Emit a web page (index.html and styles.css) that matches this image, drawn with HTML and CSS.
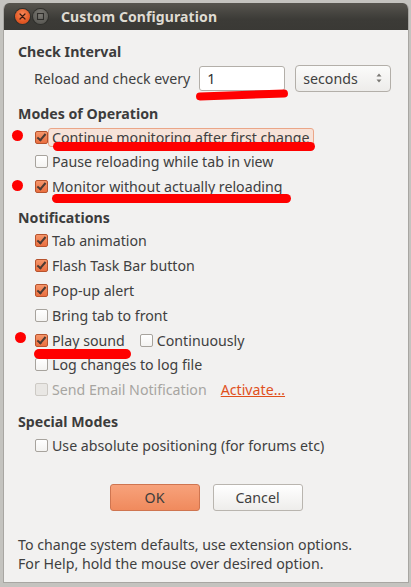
FILE: index.html
```html
<!DOCTYPE html>
<html>
<head>
<meta charset="utf-8">
<link rel="stylesheet" href="styles.css">
</head>
<body>
<div class="window">
  <div class="titlebar">
    <span class="wbtn close"><svg width="15" height="15" viewBox="0 0 15 15"><path d="M5 5 L10 10 M10 5 L5 10" stroke="#3a1a10" stroke-width="1.2" stroke-linecap="round"/></svg></span>
    <span class="wbtn maxi"><svg width="15" height="15" viewBox="0 0 15 15"><rect x="4.5" y="4.5" width="6" height="6" fill="none" stroke="#2e2d2a" stroke-width="1.1"/></svg></span>
    <span class="title">Custom Configuration</span>
  </div>
  <div class="content">
    <div class="heading">Check Interval</div>
    <div class="interval">
      <span class="label">Reload and check every</span>
      <span class="input">1</span>
      <span class="select"><span>seconds</span>
        <svg width="8" height="14" viewBox="0 0 8 14"><path d="M4 2.5 L6.5 5.5 H1.5 Z M4 11.5 L6.5 8.5 H1.5 Z" fill="#7a7874"/></svg>
      </span>
    </div>

    <div class="heading sec">Modes of Operation</div>
    <div class="group modes">
      <div class="opt"><span class="cb on"></span><span class="txt focus">Continue monitoring after first change</span></div>
      <div class="opt"><span class="cb"></span><span class="txt">Pause reloading while tab in view</span></div>
      <div class="opt"><span class="cb on"></span><span class="txt">Monitor without actually reloading</span></div>
    </div>

    <div class="heading sec2">Notifications</div>
    <div class="group notes">
      <div class="opt"><span class="cb on"></span><span class="txt">Tab animation</span></div>
      <div class="opt"><span class="cb on"></span><span class="txt">Flash Task Bar button</span></div>
      <div class="opt"><span class="cb on"></span><span class="txt">Pop-up alert</span></div>
      <div class="opt"><span class="cb"></span><span class="txt">Bring tab to front</span></div>
      <div class="opt"><span class="cb on"></span><span class="txt">Play sound</span><span class="cb second"></span><span class="txt">Continuously</span></div>
      <div class="opt"><span class="cb"></span><span class="txt">Log changes to log file</span></div>
      <div class="opt disabled"><span class="cb off"></span><span class="txt">Send Email Notification</span><span class="link">Activate...</span></div>
    </div>

    <div class="heading sec3">Special Modes</div>
    <div class="group special">
      <div class="opt"><span class="cb"></span><span class="txt">Use absolute positioning (for forums etc)</span></div>
    </div>

    <div class="buttons">
      <span class="btn ok">OK</span>
      <span class="btn cancel">Cancel</span>
    </div>

    <div class="footer">
      <div>To change system defaults, use extension options.</div>
      <div>For Help, hold the mouse over desired option.</div>
    </div>
  </div>

  <div class="marks">
    <span class="dot d1"></span>
    <span class="dot d2"></span>
    <span class="dot d3"></span>
    <span class="ul u-input"></span>
    <span class="ul u1"></span>
    <span class="ul u2"></span>
    <span class="ul u3"></span>
  </div>
</div>
</body>
</html>
```

FILE: styles.css
```css
html, body {
  margin: 0;
  padding: 0;
}
body {
  background: #c4c3bf;
  width: 411px;
  height: 587px;
  overflow: hidden;
  font-family: "Noto Sans", "DejaVu Sans", sans-serif;
  font-size: 14.2px;
  color: #404040;
}
.window {
  position: relative;
  margin: 3px 2px 0 3px;
  width: 406px;
  height: 580px;
  background: #f2f1f0;
  border-radius: 6px 6px 0 0;
  box-sizing: border-box;
  border-left: 1px solid #a8a6a2;
  border-right: 1px solid #a8a6a2;
  border-bottom: 1px solid #a8a6a2;
  overflow: hidden;
}
.titlebar {
  height: 27px;
  background: linear-gradient(#57554f, #3c3b37 60%, #3a3935);
  display: flex;
  align-items: center;
  padding-left: 11px;
}
.wbtn {
  width: 15px;
  height: 15px;
  border-radius: 50%;
  display: flex;
}
.close {
  background: radial-gradient(circle at 50% 35%, #f98a5a, #e45a26 60%, #c9461a);
  box-shadow: 0 0 0 1px #30302c;
}
.maxi {
  margin-left: 3px;
  background: radial-gradient(circle at 50% 35%, #7d7b75, #5d5c57 70%, #4e4d49);
  box-shadow: 0 0 0 1px #30302c;
}
.title {
  margin-left: 13px;
  font-weight: bold;
  color: #dfdbd2;
  font-size: 14px;
  letter-spacing: 0.1px;
}
.content {
  padding: 11px 14px 0 14px;
}
.heading {
  height: 22px;
  line-height: 22px;
  font-weight: bold;
  color: #3c3c3c;
}
.sec { margin-top: 11px; }
.sec2 { margin-top: 8px; }
.sec3 { margin-top: 9px; }
.interval {
  margin-top: 1px;
  height: 28px;
  display: flex;
  align-items: center;
  padding-left: 16px;
}
.input {
  margin-left: 9px;
  width: 86px;
  height: 25px;
  box-sizing: border-box;
  background: #fff;
  border: 1px solid #b3afa9;
  border-radius: 3px;
  padding-left: 7px;
  line-height: 23px;
  color: #2e2e2e;
}
.select {
  margin-left: 10px;
  width: 96px;
  height: 27px;
  box-sizing: border-box;
  border: 1px solid #b3afa9;
  border-radius: 4px;
  background: linear-gradient(#fbfbfa, #edecea);
  display: flex;
  align-items: center;
  justify-content: space-between;
  padding: 0 7px 0 7px;
}
.select svg { display: block; }
.opt {
  height: 24.5px;
  display: flex;
  align-items: center;
  padding-left: 17px;
}
.notes .opt { height: 24.8px; }
.cb {
  width: 13px;
  height: 13px;
  box-sizing: border-box;
  border: 1px solid #a7a39d;
  border-radius: 2px;
  background: linear-gradient(#ffffff, #f4f3f1);
  flex: none;
  position: relative;
}
.cb.on {
  border-color: #b7532d;
  background: linear-gradient(#f6966a, #ea6f40);
}
.cb.on::after {
  content: "";
  position: absolute;
  left: 3px;
  top: 0px;
  width: 3px;
  height: 7px;
  border-right: 2px solid #4b3a33;
  border-bottom: 2px solid #4b3a33;
  transform: rotate(40deg);
}
.cb.off {
  border-color: #cdcac5;
  background: #e9e7e4;
}
.txt {
  margin-left: 4px;
  line-height: 17px;
}
.txt.focus {
  margin-left: 0;
  padding: 0 3px;
  border: 1px solid #eba688;
  background: #f7e2d8;
  border-radius: 3px;
}
.cb.second { margin-left: 15px; }
.disabled .txt { color: #a7a5a1; }
.link {
  margin-left: 14px;
  color: #e0501c;
  text-decoration: underline;
}
.buttons {
  margin-top: 26.5px;
  display: flex;
  justify-content: center;
  gap: 13px;
}
.btn {
  width: 90px;
  height: 27px;
  box-sizing: border-box;
  border-radius: 3px;
  display: flex;
  align-items: center;
  justify-content: center;
}
.ok {
  background: linear-gradient(#f7a27b, #f08a5d);
  border: 1px solid #cf7550;
  color: #3c3c3c;
}
.cancel {
  background: linear-gradient(#ffffff, #eeedeb);
  border: 1px solid #b9b5af;
}
.footer {
  margin-top: 23.5px;
  line-height: 19px;
}
.marks {
  position: absolute;
  inset: 0;
  pointer-events: none;
}
.dot {
  position: absolute;
  width: 11px;
  height: 11px;
  border-radius: 50%;
  background: #ff0000;
}
.d1 { left: 8px; top: 127px; }
.d2 { left: 8px; top: 177px; }
.d3 { left: 11px; top: 329px; }
.ul {
  position: absolute;
  background: #ff0000;
  border-radius: 5px;
}
.u-input { left: 192px; top: 88px; width: 92px; height: 8px; transform: rotate(-2deg); }
.u1 { left: 49px; top: 139px; width: 262px; height: 9px; }
.u2 { left: 48px; top: 191px; width: 239px; height: 9px; }
.u3 { left: 30px; top: 346px; width: 97px; height: 10px; }
```
